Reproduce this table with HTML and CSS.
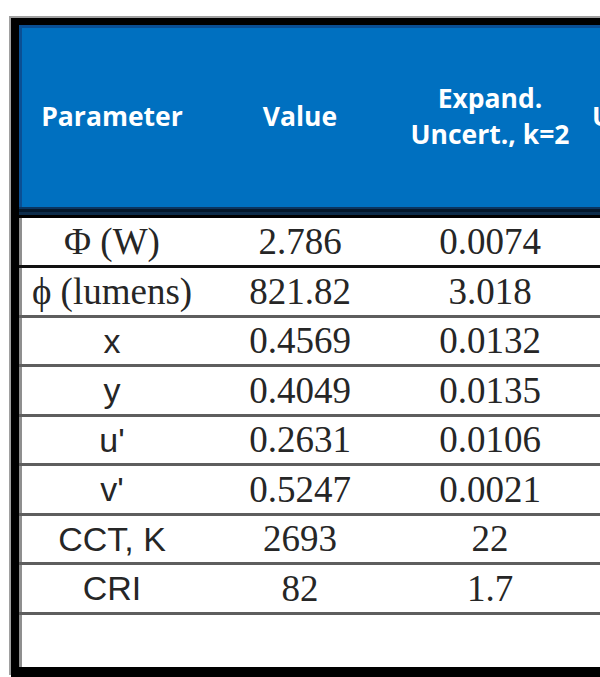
FILE: index.html
```html
<!DOCTYPE html>
<html lang="en">
<head>
<meta charset="utf-8">
<title>Measurement results</title>
<link rel="stylesheet" href="styles.css">
</head>
<body>
<div class="frame">
  <div class="head">
    <div class="hc">Parameter</div>
    <div class="hc">Value</div>
    <div class="hc">Expand.<br>Uncert., k=2</div>
    <div class="hc hc-left">Uncert. Source</div>
  </div>
  <div class="band"></div>
  <div class="body">
    <div class="row row-first">
      <div class="c serif">&Phi; (W)</div><div class="c serif">2.786</div><div class="c serif">0.0074</div><div class="c"></div>
    </div>
    <div class="row">
      <div class="c serif">&#981; (lumens)</div><div class="c serif">821.82</div><div class="c serif">3.018</div><div class="c"></div>
    </div>
    <div class="row">
      <div class="c sans">x</div><div class="c serif">0.4569</div><div class="c serif">0.0132</div><div class="c"></div>
    </div>
    <div class="row">
      <div class="c sans">y</div><div class="c serif">0.4049</div><div class="c serif">0.0135</div><div class="c"></div>
    </div>
    <div class="row">
      <div class="c sans">u'</div><div class="c serif">0.2631</div><div class="c serif">0.0106</div><div class="c"></div>
    </div>
    <div class="row">
      <div class="c sans">v'</div><div class="c serif">0.5247</div><div class="c serif">0.0021</div><div class="c"></div>
    </div>
    <div class="row">
      <div class="c sans">CCT, K</div><div class="c serif">2693</div><div class="c serif">22</div><div class="c"></div>
    </div>
    <div class="row">
      <div class="c sans">CRI</div><div class="c serif">82</div><div class="c serif">1.7</div><div class="c"></div>
    </div>
    <div class="row row-empty">
      <div class="c"></div><div class="c"></div><div class="c"></div><div class="c"></div>
    </div>
  </div>
</div>
</body>
</html>
```

FILE: styles.css
```css
html, body {
  margin: 0;
  padding: 0;
  background: #ffffff;
  overflow: hidden;
}

.frame {
  margin: 18px 0 0 11px;
  width: 900px;
  border-style: solid;
  border-color: #000000;
  border-width: 7px 0 10px 8px;
  box-shadow: -2px -2px 0 #a0a0a0;
}

.head {
  display: grid;
  grid-template-columns: 186px 190px 190px 1fr;
  height: 182px;
  background: #0070c0;
  box-shadow: inset 3px 3px 0 #0a4f94;
  color: #ffffff;
  font-family: "Open Sans", "Liberation Sans", sans-serif;
  font-weight: 700;
  font-size: 26.5px;
  line-height: 36px;
}

.hc {
  display: flex;
  align-items: center;
  justify-content: center;
  text-align: center;
}

.hc-left {
  justify-content: flex-start;
  padding-left: 7px;
  white-space: nowrap;
}

.band {
  height: 11px;
  background: linear-gradient(#0b3560 0 2px, #04182c 2px 5px, #0d2c4a 5px 8px, #000000 8px 11px);
}

.body {
  box-shadow: inset 3px 0 0 #8f8f8f;
}

.row {
  display: grid;
  grid-template-columns: 186px 190px 190px 1fr;
  height: 46.5px;
  border-bottom: 3px solid #5e5e5e;
  color: #262626;
}

.row-first {
  height: 47px;
  border-bottom-color: #111111;
}

.row-empty {
  height: 52px;
  border-bottom: 0;
}

.c {
  display: flex;
  align-items: center;
  justify-content: center;
  white-space: nowrap;
  line-height: 1;
}

.serif {
  font-family: "Liberation Serif", "Times New Roman", serif;
  font-size: 37px;
}

.sans {
  font-family: "Liberation Sans", Arial, sans-serif;
  font-size: 34px;
}
```
